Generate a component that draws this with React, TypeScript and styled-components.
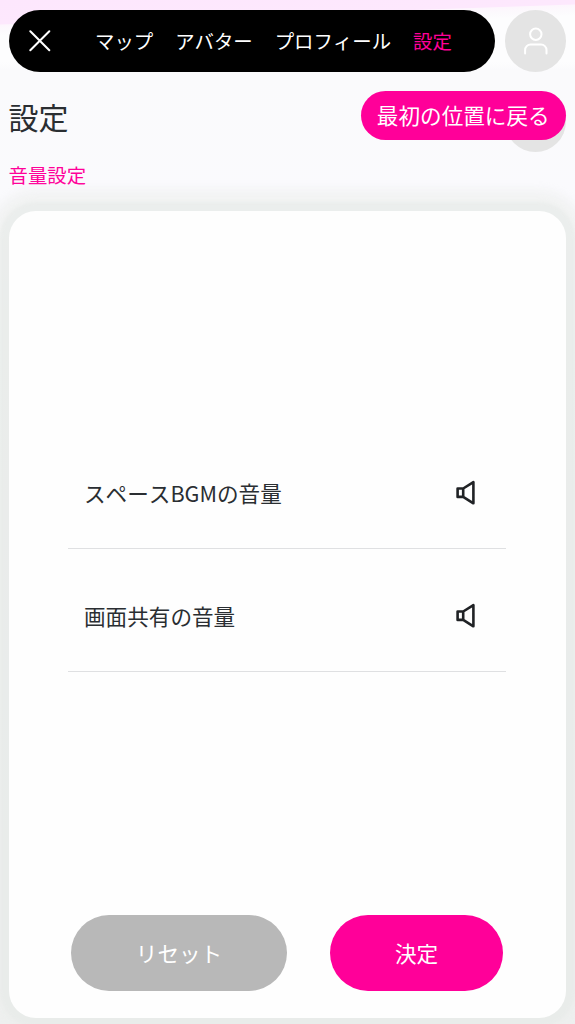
import React from "react";
import styled, { createGlobalStyle } from "styled-components";

const pink = "#ff0099";

const GlobalStyle = createGlobalStyle`
  * { box-sizing: border-box; }
  body {
    margin: 0;
    font-family: "Noto Sans CJK JP", sans-serif;
    font-kerning: none;
    color: #2a2e32;
  }
  button, a { font: inherit; color: inherit; text-decoration: none; }
`;

const Screen = styled.div`
  height: 1024px;
  padding: 10px 9px 6px;
  display: flex;
  flex-direction: column;
  overflow: hidden;
  background:
    linear-gradient(178deg, #fde7fd 0, #fde8fd 24px, #fdf6fd 25px, #fcfafd 31px, transparent 36px),
    linear-gradient(#fdfdfe 0, #fdfdfe 62px, #fafafc 70px, #fafafd 210px, #f3f4f4 340px, #eff0f0 1024px);
`;

const Header = styled.header`
  display: flex;
  justify-content: space-between;
  height: 61.5px;
  flex: none;
`;

const Bar = styled.nav`
  width: 486px;
  height: 61.5px;
  padding-left: 20px;
  border-radius: 31px;
  background: #000;
  color: #fff;
  display: flex;
  align-items: center;
`;

const Close = styled.button`
  display: flex;
  padding: 0;
  border: 0;
  background: none;
`;

const Tabs = styled.div`
  margin-left: 44px;
  display: flex;
  gap: 22px;
  font-size: 19.4px;
  line-height: 28px;
`;

const Tab = styled.a<{ $active?: boolean }>`
  white-space: nowrap;
  color: ${(p) => (p.$active ? pink : "#fff")};
`;

const Avatar = styled.div`
  width: 61px;
  height: 61.5px;
  border-radius: 50%;
  background: #e4e4e4;
  display: flex;
  align-items: center;
  justify-content: center;
`;

const HiddenAction = styled.div`
  position: absolute;
  right: 0;
  top: 0;
  width: 61px;
  height: 61px;
  border-radius: 50%;
  background: #e4e4e4;
`;

const TitleRow = styled.div`
  position: relative;
  flex: none;
  height: 49px;
  margin-top: 19.5px;
  display: flex;
  justify-content: space-between;
`;

const Title = styled.h1`
  margin: 3px 0 0 -0.5px;
  font-size: 30px;
  line-height: 44px;
  font-weight: 400;
`;

const ReturnButton = styled.button`
  position: relative;
  width: 205.5px;
  height: 49px;
  padding: 0 0 2px;
  border: 0;
  border-radius: 25px;
  background: ${pink};
  color: #fff;
  font-size: 21.6px;
  white-space: nowrap;
`;

const Section = styled.h2`
  flex: none;
  margin: 20px 0 21.5px -0.5px;
  font-size: 19.4px;
  line-height: 29px;
  font-weight: 400;
  color: ${pink};
`;

const Card = styled.main`
  flex: 1;
  display: flex;
  flex-direction: column;
  padding: 215.5px 60px 27.5px 59px;
  border-radius: 27px;
  background: #fefefe;
  box-shadow: 0 0 3px 9px rgba(230, 233, 231, 0.55), 0 0 10px 21px rgba(236, 238, 237, 0.6);
`;

const Row = styled.div`
  flex: none;
  height: 123px;
  padding: 12px 28px 0 16px;
  display: flex;
  align-items: center;
  justify-content: space-between;
  border-bottom: 1px solid #dfe0e2;
  font-size: 21.6px;
  line-height: 32px;
`;

const Actions = styled.div`
  margin-top: auto;
  padding: 0 3px;
  display: flex;
  justify-content: space-between;
`;

const Action = styled.button<{ $primary?: boolean }>`
  width: ${(p) => (p.$primary ? 173 : 216)}px;
  height: 76px;
  padding: 0 0 1px;
  border: 0;
  border-radius: 38px;
  background: ${(p) => (p.$primary ? pink : "#b8b8b8")};
  color: #fff;
  font-size: 21.6px;
`;

const SpeakerIcon = () => (
  <svg width="24" height="28" viewBox="0 0 24 28" fill="none" stroke="#202225" strokeWidth="2.6" strokeLinejoin="round">
    <path d="M3.6 9.5h5.6v8.4H3.6zM9.2 9.5l10.2-6.4v21.2L9.2 17.9" />
  </svg>
);

const rows = ["スペースBGMの音量", "画面共有の音量"];

export default function App() {
  return (
    <>
      <GlobalStyle />
      <Screen>
        <Header>
          <Bar>
            <Close aria-label="閉じる">
              <svg width="22" height="22" viewBox="0 0 22 22" stroke="#fff" strokeWidth="2" strokeLinecap="round">
                <path d="M1.3 1.3l19 19M20.3 1.3l-19 19" />
              </svg>
            </Close>
            <Tabs>
              <Tab>マップ</Tab>
              <Tab>アバター</Tab>
              <Tab>プロフィール</Tab>
              <Tab $active>設定</Tab>
            </Tabs>
          </Bar>
          <Avatar>
            <svg width="26" height="30" viewBox="0 0 26 30" fill="none" stroke="#fff" strokeWidth="2" strokeLinecap="round">
              <circle cx="12.8" cy="8.2" r="5.7" />
              <path d="M2.1 27.4V24a5.5 5.5 0 0 1 5.5-5.5h10.4a5.5 5.5 0 0 1 5.5 5.5v3.4" />
            </svg>
          </Avatar>
        </Header>
        <TitleRow>
          <HiddenAction />
          <Title>設定</Title>
          <ReturnButton>最初の位置に戻る</ReturnButton>
        </TitleRow>
        <Section>音量設定</Section>
        <Card>
          {rows.map((label) => (
            <Row key={label}>
              <span>{label}</span>
              <SpeakerIcon />
            </Row>
          ))}
          <Actions>
            <Action>リセット</Action>
            <Action $primary>決定</Action>
          </Actions>
        </Card>
      </Screen>
    </>
  );
}
